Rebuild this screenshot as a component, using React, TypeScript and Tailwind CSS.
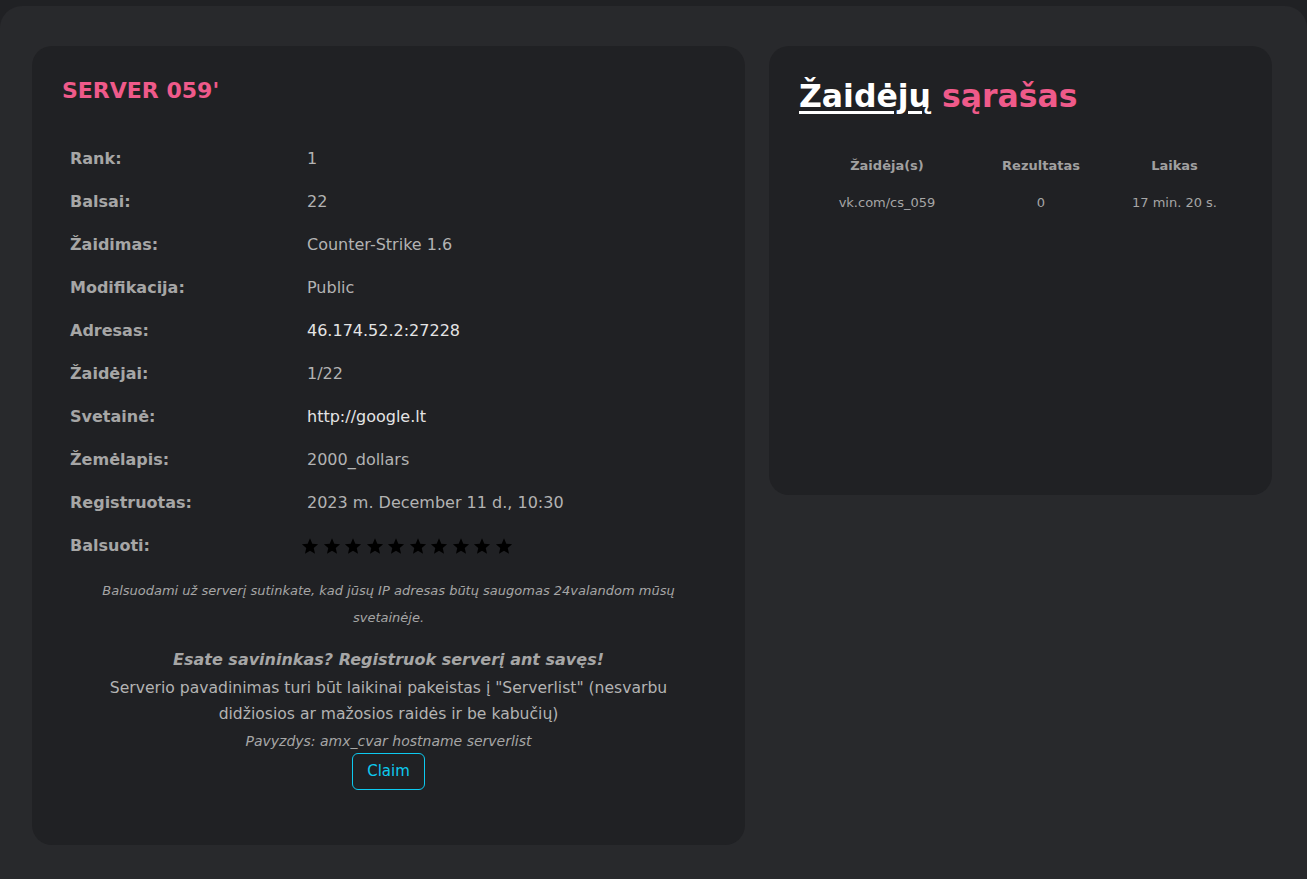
import React from "react";

const rows: { label: string; value: React.ReactNode; bright?: boolean }[] = [
  { label: "Rank:", value: "1" },
  { label: "Balsai:", value: "22" },
  { label: "Žaidimas:", value: "Counter-Strike 1.6" },
  { label: "Modifikacija:", value: "Public" },
  { label: "Adresas:", value: "46.174.52.2:27228", bright: true },
  { label: "Žaidėjai:", value: "1/22" },
  { label: "Svetainė:", value: "http://google.lt", bright: true },
  { label: "Žemėlapis:", value: "2000_dollars" },
  { label: "Registruotas:", value: "2023 m. December 11 d., 10:30" },
];

function Star() {
  return (
    <svg width="18" height="18" viewBox="0 0 24 24" className="fill-black">
      <path d="M12 1.8l3.1 7.1 7.7.7-5.8 5.1 1.7 7.5L12 18.3l-6.7 3.9 1.7-7.5-5.8-5.1 7.7-.7z" />
    </svg>
  );
}

export default function App() {
  return (
    <div className="min-h-screen bg-[#202124] pt-[6px] font-['DejaVu_Sans',sans-serif]">
      <div className="min-h-[873px] rounded-t-[22px] bg-[#28292c] pl-[32px] pr-[35px] pt-[40px]">
        <div className="flex items-start gap-[24px]">
          {/* server info */}
          <div className="w-[713px] rounded-[20px] bg-[#202124] px-[30px] pt-[30px] pb-[55px]">
            <h2 className="text-[22px] font-bold leading-[29px] text-[#ef5a8a]">SERVER 059'</h2>
            <table className="mt-[32px] w-full">
              <tbody>
                {rows.map((r) => (
                  <tr key={r.label} className="h-[43px]">
                    <td className="w-[237px] pl-[8px] text-[16px] font-bold text-[#a6a6a6]">{r.label}</td>
                    <td className={`pl-[8px] text-[16px] ${r.bright ? "text-[#e4e4e4]" : "text-[#b3b3b3]"}`}>
                      {r.value}
                    </td>
                  </tr>
                ))}
                <tr className="h-[43px]">
                  <td className="pl-[8px] text-[16px] font-bold text-[#a6a6a6]">Balsuoti:</td>
                  <td className="pl-[2px]">
                    <div className="flex gap-[3.5px]">
                      {Array.from({ length: 10 }).map((_, i) => (
                        <Star key={i} />
                      ))}
                    </div>
                  </td>
                </tr>
              </tbody>
            </table>
            <div className="mt-[10px] text-center">
              <p className="text-[13px] italic leading-[27px] text-[#a6a6a6]">
                Balsuodami už serverį sutinkate, kad jūsų IP adresas būtų saugomas 24valandom mūsų
                <br />
                svetainėje.
              </p>
              <p className="mt-[16px] mb-[2px] text-[16px] font-bold italic leading-[26px] text-[#a6a6a6]">
                Esate savininkas? Registruok serverį ant savęs!
              </p>
              <p className="text-[15.6px] leading-[26px] text-[#b3b3b3]">
                Serverio pavadinimas turi būt laikinai pakeistas į "Serverlist" (nesvarbu
                <br />
                didžiosios ar mažosios raidės ir be kabučių)
              </p>
              <p className="mt-[4px] text-[14px] italic leading-[20px] text-[#a6a6a6]">
                Pavyzdys: amx_cvar hostname serverlist
              </p>
              <button className="mt-[2px] h-[37px] rounded-[6px] border border-[#0dcaf0] px-[14px] text-[15px] text-[#0dcaf0]">
                Claim
              </button>
            </div>
          </div>

          {/* players list */}
          <div className="h-[449px] w-[503px] rounded-[20px] bg-[#202124] px-[30px] pt-[31px]">
            <h2 className="text-[31.5px] font-bold leading-[38px]">
              <a className="text-white underline decoration-[3px] underline-offset-[4px]">Žaidėjų</a>{" "}
              <span className="text-[#ef5a8a]">sąrašas</span>
            </h2>
            <table className="mt-[31px] w-[443px] text-center">
              <thead>
                <tr className="h-[40px] text-[13px] font-bold text-[#a0a0a0]">
                  <th className="w-[176px]">Žaidėja(s)</th>
                  <th className="w-[132px]">Rezultatas</th>
                  <th>Laikas</th>
                </tr>
              </thead>
              <tbody>
                <tr className="h-[34px] text-[13px] text-[#a6a6a6]">
                  <td>vk.com/cs_059</td>
                  <td>0</td>
                  <td>17 min. 20 s.</td>
                </tr>
              </tbody>
            </table>
          </div>
        </div>
      </div>
    </div>
  );
}
